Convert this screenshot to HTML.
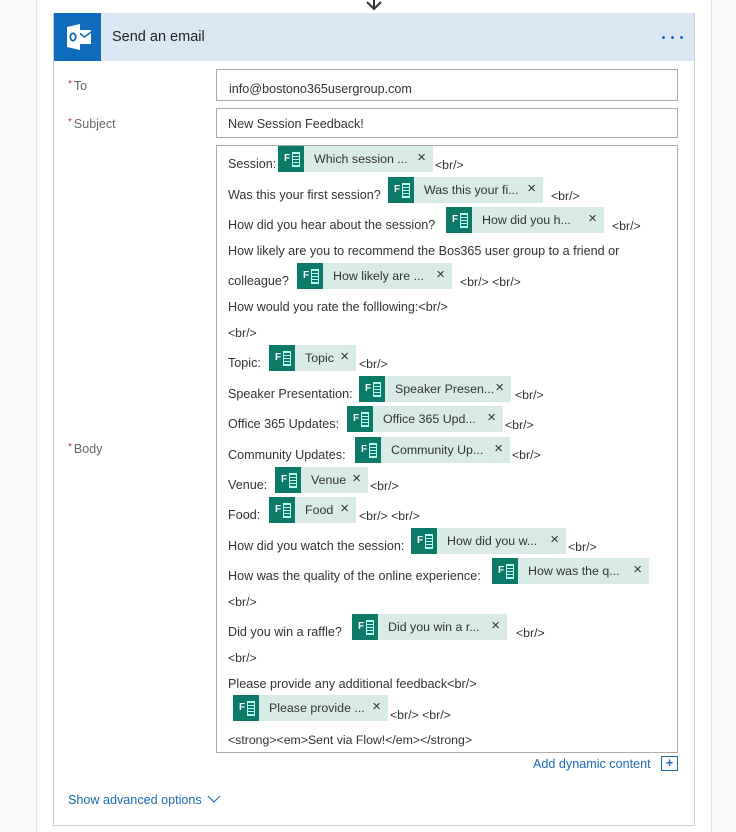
<!DOCTYPE html>
<html><head><meta charset="utf-8"><style>
*{margin:0;padding:0;box-sizing:border-box}
body{width:736px;height:832px;background:#f8f8f8;font-family:"Liberation Sans",sans-serif;position:relative;overflow:hidden;color:#333}
.page{position:absolute;left:36px;top:0;width:676px;height:832px;background:#fff;border-left:1px solid #e3e3e3;border-right:1px solid #e3e3e3}
.card{position:absolute;left:53px;top:13px;width:642px;height:813px;border:1px solid #cfcfcf;background:#fff}
.hdr{position:absolute;left:54px;top:13px;width:640px;height:48px;background:#dae8f5}
.ico{position:absolute;left:54px;top:13px;width:47px;height:48px;background:#0f6cbd}
.t{position:absolute;font-size:12.6px;line-height:16px;white-space:nowrap;color:#333}
.lbl{position:absolute;font-size:12.5px;color:#666;white-space:nowrap}
.lbl b{color:#c33;font-weight:normal;font-size:10px;vertical-align:top;margin-right:2px}
.box{position:absolute;left:216px;border:1px solid #aaa;background:#fff}
.tok{position:absolute;height:26px;background:#d8ebe7;font-size:12.4px;line-height:26px;color:#333;white-space:nowrap}
.tok .i{position:absolute;left:0;top:0;width:26px;height:26px;background:#0b7a68}
.tok .i:before{content:"F";position:absolute;left:6px;top:6px;color:#fff;font-size:10px;line-height:14px;font-weight:bold}
.tok .i:after{content:"";position:absolute;left:14px;top:6px;width:6px;height:13px;border:1px solid #bfe;background:repeating-linear-gradient(#bfe 0 1px,transparent 1px 3px)}
.tok .l{position:absolute;left:36px;top:0}
.tok .x{position:absolute;right:7px;top:-1px;font-size:15px}
.br{font-size:12.3px}
</style></head><body>
<div class="page"></div>
<svg style="position:absolute;left:364px;top:-4px" width="20" height="16"><path d="M10 0v12M3 6l7 7 7-7" stroke="#333" stroke-width="2" fill="none"/></svg>
<div class="card"></div>
<div class="hdr"></div>
<div class="ico"><svg width="47" height="48" viewBox="0 0 47 48"><rect x="24" y="17" width="13" height="14" fill="#fff"/><path d="M24 19l6.5 5 6.5-5" stroke="#0f6cbd" stroke-width="1.5" fill="none"/><path d="M13 14l13-3v26l-13-3z" fill="#fff"/><ellipse cx="19" cy="24" rx="2.7" ry="3.7" stroke="#0f6cbd" stroke-width="1.8" fill="none"/></svg></div>
<div class="t" style="left:112px;top:29px;font-size:14.5px;color:#222">Send an email</div>
<div style="position:absolute;left:659px;top:36px;width:25px;height:3px;background:radial-gradient(circle,#1a6bb8 1.3px,transparent 1.6px) 0 0/9px 3px repeat-x"></div>

<div class="lbl" style="left:68px;top:79px"><b>*</b>To</div>
<div class="lbl" style="left:68px;top:117px"><b>*</b>Subject</div>
<div class="lbl" style="left:68px;top:442px"><b>*</b>Body</div>

<div class="box" style="top:69px;width:462px;height:32px"></div>
<div class="t" style="left:229px;top:81px">info@bostono365usergroup.com</div>
<div class="box" style="top:108px;width:462px;height:30px"></div>
<div class="t" style="left:228px;top:116px">New Session Feedback!</div>
<div class="box" style="top:145px;width:462px;height:608px"></div>

<div class="t" style="left:228px;top:156px">Session:</div>
<div class="tok" style="left:278px;top:146px;width:155px"><div class="i"></div><span class="l">Which session ...</span><span class="x">×</span></div>
<div class="t br" style="left:435px;top:157px">&lt;br/&gt;</div>

<div class="t" style="left:228px;top:187px">Was this your first session?</div>
<div class="tok" style="left:388px;top:177px;width:155px"><div class="i"></div><span class="l">Was this your fi...</span><span class="x">×</span></div>
<div class="t br" style="left:551px;top:188px">&lt;br/&gt;</div>

<div class="t" style="left:228px;top:217px">How did you hear about the session?</div>
<div class="tok" style="left:446px;top:207px;width:158px"><div class="i"></div><span class="l">How did you h...</span><span class="x">×</span></div>
<div class="t br" style="left:612px;top:218px">&lt;br/&gt;</div>

<div class="t" style="left:228px;top:243px">How likely are you to recommend the Bos365 user group to a friend or</div>
<div class="t" style="left:228px;top:273px">colleague?</div>
<div class="tok" style="left:297px;top:263px;width:155px"><div class="i"></div><span class="l">How likely are ...</span><span class="x">×</span></div>
<div class="t br" style="left:460px;top:274px">&lt;br/&gt; &lt;br/&gt;</div>

<div class="t" style="left:228px;top:299px">How would you rate the folllowing:&lt;br/&gt;</div>
<div class="t br" style="left:228px;top:325px">&lt;br/&gt;</div>

<div class="t" style="left:228px;top:355px">Topic:</div>
<div class="tok" style="left:269px;top:345px;width:87px"><div class="i"></div><span class="l">Topic</span><span class="x">×</span></div>
<div class="t br" style="left:359px;top:356px">&lt;br/&gt;</div>

<div class="t" style="left:228px;top:386px">Speaker Presentation:</div>
<div class="tok" style="left:359px;top:376px;width:152px"><div class="i"></div><span class="l">Speaker Presen...</span><span class="x">×</span></div>
<div class="t br" style="left:515px;top:387px">&lt;br/&gt;</div>

<div class="t" style="left:228px;top:416px">Office 365 Updates:</div>
<div class="tok" style="left:347px;top:406px;width:156px"><div class="i"></div><span class="l">Office 365 Upd...</span><span class="x">×</span></div>
<div class="t br" style="left:505px;top:417px">&lt;br/&gt;</div>

<div class="t" style="left:228px;top:447px">Community Updates:</div>
<div class="tok" style="left:355px;top:437px;width:155px"><div class="i"></div><span class="l">Community Up...</span><span class="x">×</span></div>
<div class="t br" style="left:512px;top:447px">&lt;br/&gt;</div>

<div class="t" style="left:228px;top:477px">Venue:</div>
<div class="tok" style="left:275px;top:467px;width:93px"><div class="i"></div><span class="l">Venue</span><span class="x">×</span></div>
<div class="t br" style="left:370px;top:478px">&lt;br/&gt;</div>

<div class="t" style="left:228px;top:507px">Food:</div>
<div class="tok" style="left:269px;top:497px;width:87px"><div class="i"></div><span class="l">Food</span><span class="x">×</span></div>
<div class="t br" style="left:359px;top:508px">&lt;br/&gt; &lt;br/&gt;</div>

<div class="t" style="left:228px;top:538px">How did you watch the session:</div>
<div class="tok" style="left:411px;top:528px;width:155px"><div class="i"></div><span class="l">How did you w...</span><span class="x">×</span></div>
<div class="t br" style="left:568px;top:539px">&lt;br/&gt;</div>

<div class="t" style="left:228px;top:568px">How was the quality of the online experience:</div>
<div class="tok" style="left:492px;top:558px;width:157px"><div class="i"></div><span class="l">How was the q...</span><span class="x">×</span></div>
<div class="t br" style="left:228px;top:594px">&lt;br/&gt;</div>

<div class="t" style="left:228px;top:624px">Did you win a raffle?</div>
<div class="tok" style="left:352px;top:614px;width:155px"><div class="i"></div><span class="l">Did you win a r...</span><span class="x">×</span></div>
<div class="t br" style="left:516px;top:625px">&lt;br/&gt;</div>
<div class="t br" style="left:228px;top:650px">&lt;br/&gt;</div>

<div class="t" style="left:228px;top:676px">Please provide any additional feedback&lt;br/&gt;</div>
<div class="tok" style="left:233px;top:695px;width:155px"><div class="i"></div><span class="l">Please provide ...</span><span class="x">×</span></div>
<div class="t br" style="left:390px;top:707px">&lt;br/&gt; &lt;br/&gt;</div>
<div class="t br" style="left:228px;top:732px">&lt;strong&gt;&lt;em&gt;Sent via Flow!&lt;/em&gt;&lt;/strong&gt;</div>

<div class="t" style="left:533px;top:756px;color:#1a6bb8">Add dynamic content</div>
<div style="position:absolute;left:661px;top:756px;width:17px;height:15px;border:1px solid #1a6bb8;color:#1a6bb8;font-size:13px;line-height:12px;text-align:center;font-weight:bold">+</div>
<div class="t" style="left:68px;top:792px;color:#1a6bb8">Show advanced options</div>
<svg style="position:absolute;left:207px;top:795px" width="14" height="9"><path d="M1 1l6 6 6-6" stroke="#1a6bb8" fill="none"/></svg>
</body></html>
